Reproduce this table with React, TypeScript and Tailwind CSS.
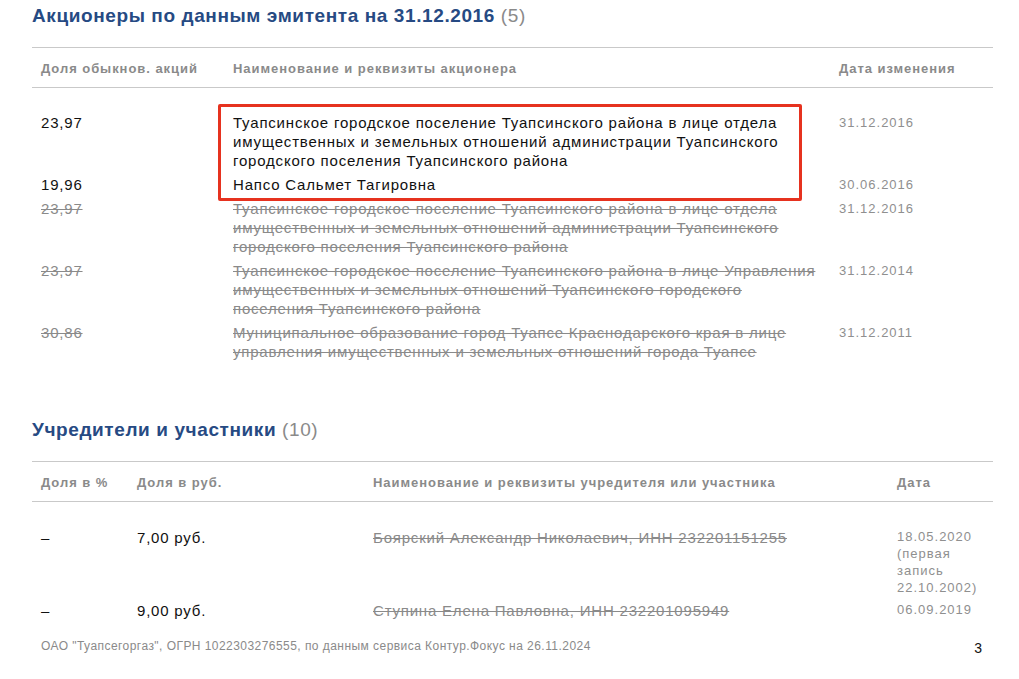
import React from "react";

type Holder = { share: string; name: string; date: string; old?: boolean };

const holders: Holder[] = [
  {
    share: "23,97",
    name: "Туапсинское городское поселение Туапсинского района в лице отдела имущественных и земельных отношений администрации Туапсинского городского поселения Туапсинского района",
    date: "31.12.2016",
  },
  { share: "19,96", name: "Напсо Сальмет Тагировна", date: "30.06.2016" },
  {
    share: "23,97",
    name: "Туапсинское городское поселение Туапсинского района в лице отдела имущественных и земельных отношений администрации Туапсинского городского поселения Туапсинского района",
    date: "31.12.2016",
    old: true,
  },
  {
    share: "23,97",
    name: "Туапсинское городское поселение Туапсинского района в лице Управления имущественных и земельных отношений Туапсинского городского поселения Туапсинского района",
    date: "31.12.2014",
    old: true,
  },
  {
    share: "30,86",
    name: "Муниципальное образование город Туапсе Краснодарского края в лице управления имущественных и земельных отношений города Туапсе",
    date: "31.12.2011",
    old: true,
  },
];

const founders = [
  {
    pct: "–",
    rub: "7,00 руб.",
    name: "Боярский Александр Николаевич, ИНН 232201151255",
    date: ["18.05.2020", "(первая", "запись", "22.10.2002)"],
  },
  {
    pct: "–",
    rub: "9,00 руб.",
    name: "Ступина Елена Павловна, ИНН 232201095949",
    date: ["06.09.2019"],
  },
];

function Title({ text, count }: { text: string; count: string }) {
  return (
    <h2 className="text-[19px] leading-[22px] font-bold text-[#264a83] tracking-[0.6px]">
      {text} <span className="font-normal text-[#8a8a8a]">{count}</span>
    </h2>
  );
}

export default function App() {
  return (
    <div className="relative w-[1019px] h-[679px] overflow-hidden bg-white font-['Liberation_Sans',Arial,sans-serif] text-[#111]">
      <div className="pl-[32px] pr-[26px] pt-[5px]">
        <Title text="Акционеры по данным эмитента на 31.12.2016" count="(5)" />

        <div className="mt-[20px] border-t border-[#c9c9c9]">
          <div className="grid h-[40px] grid-cols-[192px_606px_1fr] items-center border-b border-[#c9c9c9] pl-[9px] pt-[3px] text-[13px] font-bold tracking-[0.95px] text-[#8a8a8a]">
            <span>Доля обыкнов. акций</span>
            <span>Наименование и реквизиты акционера</span>
            <span>Дата изменения</span>
          </div>

          <div className="pt-[25px]">
            {holders.map((h, i) => (
              <div
                key={i}
                className="grid grid-cols-[192px_606px_1fr] pb-[5px] pl-[9px] text-[15px] leading-[19px] tracking-[0.8px]"
              >
                <span className={h.old ? "text-[#8a8a8a] line-through" : "text-[#111]"}>{h.share}</span>
                <span className={"pr-[14px] " + (h.old ? "text-[#8a8a8a] line-through" : "text-[#111]")}>
                  {h.name}
                </span>
                <span className="text-[13px] tracking-[1px] text-[#8f8f8f]">{h.date}</span>
              </div>
            ))}
          </div>
        </div>

        <div className="mt-[53px]">
          <Title text="Учредители и участники" count="(10)" />
        </div>

        <div className="mt-[20px] border-t border-[#c9c9c9]">
          <div className="grid h-[40px] grid-cols-[96px_236px_524px_1fr] items-center border-b border-[#c9c9c9] pl-[9px] pt-[2px] text-[13px] font-bold tracking-[0.95px] text-[#8a8a8a]">
            <span>Доля в %</span>
            <span>Доля в руб.</span>
            <span>Наименование и реквизиты учредителя или участника</span>
            <span>Дата</span>
          </div>

          <div className="pt-[26px]">
            {founders.map((f, i) => (
              <div
                key={i}
                className="grid grid-cols-[96px_236px_524px_1fr] pb-[5px] pl-[9px] text-[15px] leading-[19px] tracking-[0.8px]"
              >
                <span>{f.pct}</span>
                <span>{f.rub}</span>
                <span className="text-[#8a8a8a] line-through">{f.name}</span>
                <span className="text-[13px] leading-[17px] tracking-[1px] text-[#8f8f8f]">
                  {f.date.map((d) => (
                    <span key={d} className="block">
                      {d}
                    </span>
                  ))}
                </span>
              </div>
            ))}
          </div>
        </div>

        <div className="mt-[11px] flex items-center justify-between pl-[9px] pr-[11px]">
          <span className="text-[12px] leading-[16px] tracking-[0.45px] text-[#8a8a8a]">
            ОАО "Туапсегоргаз", ОГРН 1022303276555, по данным сервиса Контур.Фокус на 26.11.2024
          </span>
          <span className="mt-[4px] text-[14px] leading-[16px] text-[#111]">3</span>
        </div>
      </div>

      {/* red highlight frame drawn over the first two rows */}
      <div className="pointer-events-none absolute left-[218px] top-[104px] h-[97px] w-[584px] rounded-[2px] border-[3px] border-[#e6321f]" />
    </div>
  );
}
